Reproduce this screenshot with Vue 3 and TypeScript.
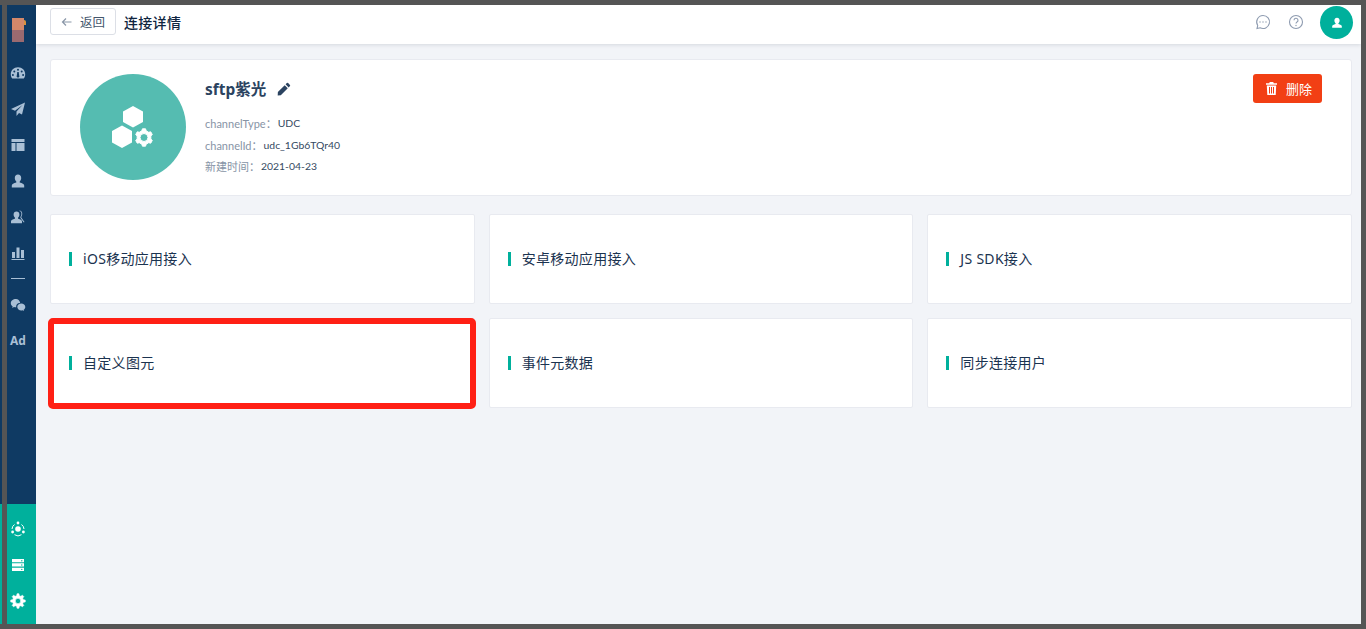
<script setup lang="ts">
interface Card { title: string; marked: boolean }
const cards: Card[] = [
  { title: 'iOS移动应用接入', marked: false },
  { title: '安卓移动应用接入', marked: false },
  { title: 'JS SDK接入', marked: false },
  { title: '自定义图元', marked: true },
  { title: '事件元数据', marked: false },
  { title: '同步连接用户', marked: false },
]

function gear(cx: number, cy: number, outer: number, inner: number, hole: number, teeth: number): string {
  const step = (Math.PI * 2) / teeth
  const pt = (r: number, a: number) => `${(cx + r * Math.cos(a)).toFixed(2)} ${(cy + r * Math.sin(a)).toFixed(2)}`
  let d = ''
  for (let i = 0; i < teeth; i++) {
    const a = i * step - Math.PI / 2
    d += `${i ? 'L' : 'M'}${pt(inner, a - step * 0.3)}L${pt(outer, a - step * 0.17)}L${pt(outer, a + step * 0.17)}L${pt(inner, a + step * 0.3)}`
  }
  d += `ZM${cx - hole} ${cy}a${hole} ${hole} 0 1 0 ${hole * 2} 0a${hole} ${hole} 0 1 0 ${-hole * 2} 0Z`
  return d
}
const discGear = gear(32, 31.5, 8.8, 7, 4, 6)
const sideGear = gear(8, 8, 7.3, 5.5, 2.7, 8)
</script>

<template>
  <div class="screen">
    <div class="edge-top"></div>
    <div class="edge-left"></div>
    <aside class="side">
      <div class="logo"><i class="logo-arc"></i></div>
      <nav class="nav">
        <svg viewBox="0 0 16 16"><path fill-rule="evenodd" d="M8 2.200C3.800 2.200.8 5.300.8 9.200c0 1.700.6 3.200 1.500 4.400h11.400c.9-1.200 1.500-2.700 1.500-4.400 0-3.900-3-7-7.200-7zM8 3.800a1 1 0 1 1 0 2 1 1 0 0 1 0-2zM4.300 5.400a1 1 0 1 1 0 2 1 1 0 0 1 0-2zm7.400 0a1 1 0 1 1 0 2 1 1 0 0 1 0-2zM2.900 9.100a1 1 0 1 1 0 2 1 1 0 0 1 0-2zm10.200 0a1 1 0 1 1 0 2 1 1 0 0 1 0-2zM7.300 7h1.400l.5 3.400a1.400 1.400 0 1 1-2.400 0z"/></svg>
        <svg viewBox="0 0 16 16"><path d="M15 1.500 1 8l4 1.800L12.500 4 6.500 10.500V15l2.500-3 3 1.500z"/></svg>
        <svg viewBox="0 0 16 16"><path d="M1.500 2h13v3h-13zM1.500 6h4v8h-4zM6.500 6h8v8h-8z"/></svg>
        <svg viewBox="0 0 16 16"><path d="M8 1.500c-2 0-3.200 1.500-3.200 3.500 0 1.400.6 2.700 1.500 3.400v1.200C3.800 10.300 1.800 11 1.800 12.500V14.500h12.400v-2c0-1.500-2-2.200-4.500-2.900V8.400c.9-.7 1.500-2 1.500-3.400 0-2-1.200-3.500-3.200-3.500z"/></svg>
        <svg viewBox="0 0 16 16"><path d="M6.500 2.500c-1.800 0-2.900 1.300-2.900 3.100 0 1.300.5 2.400 1.300 3v1.100C2.700 10.300 1 11 1 12.300v2h11v-2c0-1.300-1.700-2-3.900-2.600V8.600c.8-.6 1.300-1.700 1.300-3 0-1.800-1.100-3.100-2.900-3.100z"/><path d="M9.500 1.500c2.500.2 3.400 3 2.300 5.300l-.6 1.400c.8 1.500 2.200 2.800 3.300 4.800l-.7.400c-1.200-1.800-2.700-3-3.500-5 .3-.9 1.600-3 1-4.700-.3-.9-1-1.500-1.800-1.700z"/></svg>
        <svg viewBox="0 0 16 16"><path d="M2 7h3v6H2zM6.500 2.500h3V13h-3zM11 5h3v8h-3zM1.500 14h13v1h-13z"/></svg>
        <div class="rule"></div>
        <svg viewBox="0 0 16 16"><path d="M6 2C3 2 .8 3.900.8 6.200c0 1.300.7 2.400 1.900 3.200l-.5 1.500 1.800-.9c.6.200 1.200.3 1.800.3h.4a3.600 3.600 0 0 1 3.500-4.400h.5C9.700 3.600 8 2 6 2z"/><path d="M15.300 10c0-1.900-1.900-3.400-4-3.400-2.200 0-4 1.500-4 3.400s1.800 3.400 4 3.400c.5 0 .9-.1 1.400-.2l1.400.8-.4-1.200c1-.7 1.600-1.700 1.600-2.800z"/></svg>
        <span class="ad">Ad</span>
      </nav>
      <div class="side-foot">
        <svg viewBox="0 0 16 16"><circle cx="8" cy="8" r="2.800"/><circle cx="8" cy="2" r="1.400"/><circle cx="2.600" cy="11" r="1.400"/><circle cx="13.400" cy="11" r="1.400"/><path d="M4.500 3.500A6 6 0 0 0 2 8M11.500 3.500A6 6 0 0 1 14 8M4.500 13.700a6 6 0 0 0 7 0" fill="none" stroke="#fff" stroke-width="1"/></svg>
        <svg viewBox="0 0 16 16"><path fill-rule="evenodd" d="M2 2h12v3.300H2zM2 6.300h12v3.300H2zM2 10.700h12V14H2zM11.800 3a.7.7 0 1 0 0 1.400.7.7 0 0 0 0-1.400zm0 4.300a.7.7 0 1 0 0 1.400.7.7 0 0 0 0-1.400zm0 4.400a.7.7 0 1 0 0 1.400.7.7 0 0 0 0-1.400z"/></svg>
        <svg viewBox="0 0 16 16"><path class="soft-small" fill-rule="evenodd" :d="sideGear"/></svg>
      </div>
    </aside>

    <main class="main">
      <header class="bar">
        <button class="back" type="button">
          <svg viewBox="0 0 12 12"><path d="M10.500 6h-9M5 2.500 1.500 6 5 9.500" fill="none" stroke="#8a97a8" stroke-width="1.200"/></svg>
          返回
        </button>
        <h1>连接详情</h1>
        <div class="tools">
          <svg viewBox="0 0 16 16" fill="none" stroke="#8e9bb0" stroke-width="1.100"><path d="M8 1.500a6.500 6.500 0 1 1-2.900 12.300L2 14.500l.7-3A6.500 6.500 0 0 1 8 1.500z"/><circle cx="5" cy="8" r=".7" fill="#8e9bb0" stroke="none"/><circle cx="8" cy="8" r=".7" fill="#8e9bb0" stroke="none"/><circle cx="11" cy="8" r=".7" fill="#8e9bb0" stroke="none"/></svg>
          <svg viewBox="0 0 16 16" fill="none" stroke="#8e9bb0" stroke-width="1.100"><circle cx="8" cy="8" r="6.500"/><path d="M6 6.300a2 2 0 1 1 3 1.700c-.7.400-1 .8-1 1.600"/><circle cx="8" cy="11.500" r=".7" fill="#8e9bb0" stroke="none"/></svg>
          <div class="avatar">
            <svg viewBox="0 0 16 16"><path d="M8 2c-1.800 0-3 1.300-3 3.200 0 1.300.6 2.400 1.400 3v1C4.200 9.900 2.500 10.500 2.500 11.800V13.500h11v-1.700c0-1.300-1.700-1.900-3.900-2.600v-1c.8-.6 1.400-1.700 1.400-3C11 3.300 9.800 2 8 2z"/></svg>
          </div>
        </div>
      </header>

      <section class="content">
        <div class="detail">
          <div class="disc">
            <svg viewBox="0 0 42 42">
              <path d="M21 0l10 5.500v10.500L21 21.500 11 16V5.500z"/>
              <path d="M10 19.500l10 5.500v11.500L10 42 0 36.500V25z"/>
              <path class="soft" fill-rule="evenodd" :d="discGear"/>
            </svg>
          </div>
          <div class="info">
            <div class="name">
              <span>sftp紫光</span>
              <svg viewBox="0 0 16 16"><path d="M11.300 1.200a1 1 0 0 1 1.400 0l2.100 2.100a1 1 0 0 1 0 1.400l-1.500 1.500L9.800 2.700zM8.800 3.700l3.500 3.500-8 8L.8 15.500 1 11.500z"/></svg>
            </div>
            <dl class="meta">
              <div><dt>channelType：</dt><dd>UDC</dd></div>
              <div><dt>channelId：</dt><dd>udc_1Gb6TQr40</dd></div>
              <div><dt>新建时间：</dt><dd>2021-04-23</dd></div>
            </dl>
          </div>
          <button class="danger" type="button">
            <svg viewBox="0 0 11 13"><path fill-rule="evenodd" d="M3.800 0h3.400l.6 1.300H11v1.400H0V1.300h3.200zM.8 3.500h9.400l-.5 9.500H1.300zM3 5v6.500h1V5zm2 0v6.500h1V5zm2 0v6.500h1V5z"/></svg>
            删除
          </button>
        </div>

        <div class="grid">
          <div v-for="c in cards" :key="c.title" class="card" :class="{ marked: c.marked }">
            <span class="tick"></span><span class="card-title">{{ c.title }}</span>
          </div>
        </div>
      </section>
    </main>
  </div>
</template>

<style>
html, body { margin: 0; padding: 0; }
</style>

<style scoped>
.screen {
  display: flex;
  width: 1366px;
  height: 629px;
  box-sizing: border-box;
  padding-top: 5px;
  background: #f2f4f8;
  font-family: "Noto Sans", "Noto Sans CJK SC", sans-serif;
  color: #1b2e45;
  overflow: hidden;
  position: relative;
  border-right: 5px solid #555;
  border-bottom: 5px solid #555;
}
.edge-top { position: absolute; left: 0; top: 0; right: 0; height: 5px; background: #555; z-index: 3; }
.edge-left { position: absolute; left: 2px; top: 0; bottom: 0; width: 5px; background: #555; z-index: 3; }
.side {
  width: 36px;
  flex: none;
  background: #0f3a63;
  display: flex;
  flex-direction: column;
  box-sizing: border-box;
  fill: #a9bfd5;
}
.side svg { width: 16px; height: 16px; display: block; }
.logo {
  width: 12px;
  height: 24px;
  margin: 13px 0 0 12px;
  background: linear-gradient(#d3886a 0 12px, #9a6a70 12px);
  position: relative;
}
.logo-arc {
  position: absolute;
  left: 12px;
  top: 2px;
  width: 2px;
  height: 5px;
  border-top-right-radius: 3px;
  background: #d9933f;
}
.nav {
  display: flex;
  flex-direction: column;
  align-items: center;
  gap: 20px;
  margin-top: 23px;
  flex: 1;
}
.rule { width: 14px; height: 1px; background: #a9bfd5; margin: -3px 0 -2px; }
.ad { font: 700 12px/14px "Noto Sans", sans-serif; color: #a9bfd5; margin-top: 1px; }
.side-foot {
  padding: 17px 0 15px;
  background: #00b09c;
  display: flex;
  flex-direction: column;
  align-items: center;
  gap: 20px;
  fill: #fff;
}
.soft { stroke: #fff; stroke-width: 1; stroke-linejoin: round; }
.soft-small { stroke: #fff; stroke-width: .6; stroke-linejoin: round; }
.main { flex: 1; min-width: 0; display: flex; flex-direction: column; }
.bar {
  height: 39px;
  flex: none;
  background: #fff;
  box-shadow: 0 1px 4px rgba(0, 21, 41, .12);
  display: flex;
  align-items: center;
  padding: 0 8px 6px 14px;
  box-sizing: border-box;
}
.back {
  display: flex;
  align-items: center;
  gap: 7px;
  width: 66px;
  height: 27px;
  padding: 0 0 0 10px;
  box-sizing: border-box;
  background: #fff;
  border: 1px solid #dcdfe6;
  border-radius: 3px;
  font: 12.500px "Noto Sans", "Noto Sans CJK SC", sans-serif;
  color: #44566c;
}
.back svg { width: 12px; height: 12px; }
.bar h1 { font-size: 14px; letter-spacing: .3px; font-weight: 500; margin: 0 0 0 8px; color: #0f2540; }
.tools { margin-left: auto; display: flex; align-items: center; }
.tools > svg { width: 16px; height: 16px; margin-right: 17px; }
.tools > svg + svg { margin-right: 16px; }
.avatar {
  width: 33px;
  height: 33px;
  border-radius: 50%;
  background: #00b09c;
  display: flex;
  align-items: center;
  justify-content: center;
  fill: #fff;
  margin-top: 2px;
}
.avatar svg { width: 14px; height: 14px; }
.content { padding: 15px 9px 0 14px; flex: 1; }
.detail {
  height: 137px;
  box-sizing: border-box;
  background: #fff;
  border: 1px solid #e8eaf0;
  border-radius: 3px;
  display: flex;
  padding: 14px 29px 0 29px;
}
.disc {
  width: 106px;
  height: 106px;
  border-radius: 50%;
  background: #55bcb1;
  display: flex;
  align-items: center;
  justify-content: center;
  fill: #fff;
  flex: none;
}
.disc svg { width: 42px; height: 42px; }
.info { margin-left: 19px; flex: 1; }
.name {
  display: flex;
  align-items: center;
  gap: 11px;
  font-size: 15.500px;
  font-weight: 700;
  color: #2b4360;
  line-height: 22px;
  margin-top: 4px;
}
.name svg { width: 14px; height: 14px; fill: #2b4360; }
.meta { margin: 13px 0 0; font-family: Lato, "Noto Sans CJK SC", sans-serif; font-size: 11px; line-height: 21.500px; }
.meta div { display: flex; }
.meta dt { color: #8794a6; margin-right: 1px; }
.meta dd { margin: 0; color: #34495f; font-size: 10.400px; }
.danger {
  width: 69px;
  height: 29px;
  box-sizing: border-box;
  border: 0;
  border-radius: 3px;
  background: #f23f14;
  color: #fff;
  display: flex;
  align-items: center;
  padding-left: 13px;
  gap: 9px;
  font: 13px "Noto Sans", "Noto Sans CJK SC", sans-serif;
  fill: #fff;
  flex: none;
}
.danger svg { width: 11px; height: 13px; }
.grid {
  display: grid;
  grid-template-columns: repeat(3, 1fr);
  gap: 14px;
  margin-top: 18px;
}
.card {
  height: 90px;
  box-sizing: border-box;
  background: #fff;
  border: 1px solid #e8eaf0;
  border-radius: 2px;
  display: flex;
  align-items: center;
  padding-left: 18px;
  font-size: 14px;
  letter-spacing: .3px;
  color: #1b3350;
  position: relative;
}
.tick { width: 3px; height: 14px; background: #00b09c; margin-right: 11px; }
.card-title { margin-bottom: 3px; }
.marked::after {
  content: "";
  position: absolute;
  top: -1px;
  left: -3px;
  right: -2px;
  bottom: -2px;
  border: 6px solid #ff2015;
  border-radius: 5px;
}
</style>
